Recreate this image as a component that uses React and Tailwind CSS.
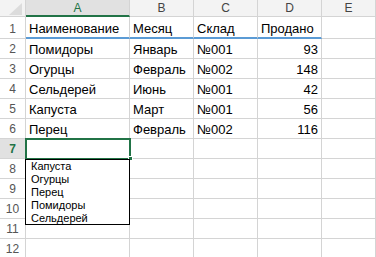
import React from "react";

const cols = ["A", "B", "C", "D", "E"];
const colW = ["w-[104px]", "w-[64px]", "w-[64px]", "w-[64px]", "w-[54px]"];

const data = [
  ["Наименование", "Месяц", "Склад", "Продано"],
  ["Помидоры", "Январь", "№001", "93"],
  ["Огурцы", "Февраль", "№002", "148"],
  ["Сельдерей", "Июнь", "№001", "42"],
  ["Капуста", "Март", "№001", "56"],
  ["Перец", "Февраль", "№002", "116"],
];

const listItems = ["Капуста", "Огурцы", "Перец", "Помидоры", "Сельдерей"];

function Corner() {
  return (
    <div className="w-[26px] h-[17px] shrink-0 bg-[#f3f3f3] border-r border-b border-[#d4d4d4] relative">
      <svg className="absolute left-[9px] top-[3px]" width="13" height="12" viewBox="0 0 13 12">
        <polygon points="13,0 13,12 0,12" fill="#dcdcdc" />
      </svg>
    </div>
  );
}

function ColHeader({ label, i }) {
  const active = i === 0;
  return (
    <div
      className={
        "h-[17px] shrink-0 flex items-center justify-center text-[12px] leading-none border-r border-[#d4d4d4] " +
        colW[i] +
        (active
          ? " bg-[#e1e1e1] text-[#217346] border-b-2 border-b-[#217346]"
          : " bg-[#f3f3f3] text-[#444] border-b")
      }
    >
      {label}
    </div>
  );
}

function RowNum({ n, tall }) {
  const active = n === 7;
  return (
    <div
      className={
        "w-[26px] shrink-0 flex items-end justify-center pb-[3px] text-[12px] leading-none border-r border-b border-[#d4d4d4] " +
        (tall ? "h-[22px] " : "h-[20px] ") +
        (active ? "bg-[#e1e1e1] text-[#217346] font-bold border-r-[#217346]" : "text-[#555]")
      }
    >
      {n}
    </div>
  );
}

function Cell({ i, text, tall, header }) {
  const numeric = i === 3 && !header;
  const blue = tall && i < 4;
  return (
    <div
      className={
        "shrink-0 flex items-end pb-[2px] px-[3px] text-[13px] leading-none text-black whitespace-nowrap border-r border-[#d4d4d4] " +
        colW[i] +
        (tall ? " h-[22px]" : " h-[20px]") +
        (blue ? " border-b-2 border-b-[#5b9bd5]" : " border-b") +
        (numeric ? " justify-end" : "")
      }
    >
      {text}
    </div>
  );
}

export default function App() {
  const rows = [];
  for (let r = 1; r <= 12; r++) {
    const vals = data[r - 1] || [];
    rows.push(
      <div key={r} className="flex relative">
        <RowNum n={r} tall={r === 1} />
        {cols.map((c, i) => (
          <Cell key={c} i={i} text={vals[i] || ""} tall={r === 1} header={r === 1} />
        ))}
        {r === 7 && (
          <>
            {/* active cell frame with fill handle */}
            <div className="absolute left-[25px] top-[-1px] w-[106px] h-[22px] border-2 border-[#217346] pointer-events-none" />
            <div className="absolute left-[128px] top-[17px] w-[5px] h-[5px] bg-[#217346] border border-white" />
          </>
        )}
      </div>
    );
  }

  return (
    <div className="w-[376px] h-[257px] overflow-hidden bg-white relative font-['Liberation_Sans',Arial,sans-serif]">
      <div className="flex">
        <Corner />
        {cols.map((c, i) => (
          <ColHeader key={c} label={c} i={i} />
        ))}
      </div>
      {rows}
      {/* validation dropdown list */}
      <div className="absolute left-[25px] top-[159px] w-[105px] h-[66px] bg-white border border-black pl-[5px] text-[11px] leading-[13px] text-black">
        {listItems.map((t) => (
          <div key={t}>{t}</div>
        ))}
      </div>
    </div>
  );
}
